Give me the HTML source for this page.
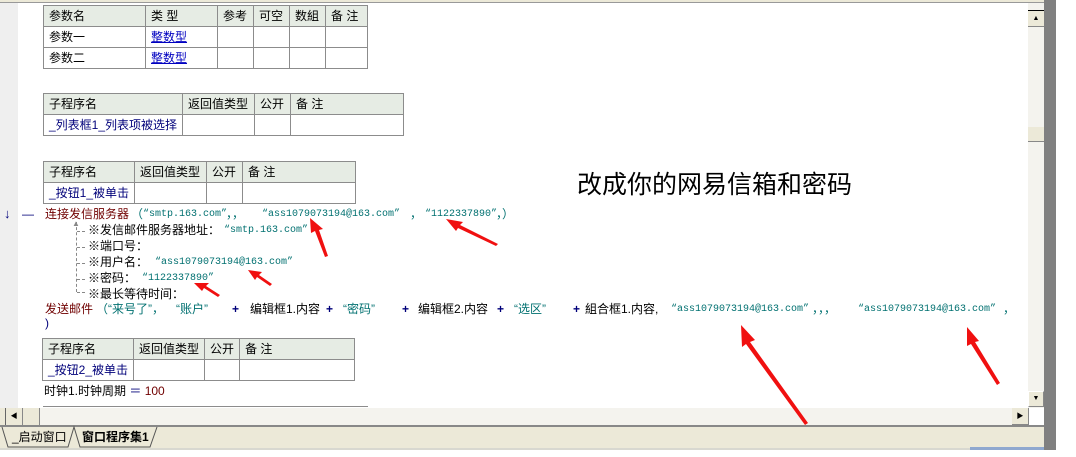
<!DOCTYPE html>
<html><head><meta charset="utf-8"><style>
*{margin:0;padding:0;box-sizing:border-box}
body{width:1076px;height:457px;position:relative;overflow:hidden;background:#fff;font-family:"Liberation Sans","WenQuanYi Zen Hei","Noto Sans CJK SC",sans-serif;font-size:12px;color:#000}
.a{position:absolute;white-space:nowrap;line-height:14px}
table{position:absolute;border-collapse:collapse;font-size:12px}
td{border:1px solid #8c8c8c;padding:0 5px;height:21px;line-height:14px;white-space:nowrap}
tr.h td{background:#e6ece4}
.bl{color:#0000c0;text-decoration:underline}
.nv{color:#00007a}
.dr{color:#700000}
.tl{color:#007070;font-family:"Liberation Mono",monospace;font-size:10px;margin-top:1px}
.tc{color:#007070;font-size:12px}
.op{color:#00007a;font-weight:bold}
</style></head><body>
<div style="position:absolute;left:0;top:0;width:18px;height:408px;background:#efefef"></div>
<div style="position:absolute;left:0;top:0;width:1044px;height:3px;background:#ece9d8;border-bottom:1px solid #999"></div>

<table style="left:43px;top:5px;width:325px">
<tr class="h"><td style="width:102px">参数名</td><td style="width:72px">类 型</td><td style="width:36px">参考</td><td style="width:36px">可空</td><td style="width:36px">数組</td><td>备 注</td></tr>
<tr><td>参数一</td><td class="bl">整数型</td><td></td><td></td><td></td><td></td></tr>
<tr><td>参数二</td><td class="bl">整数型</td><td></td><td></td><td></td><td></td></tr>
</table>

<table style="left:43px;top:93px;width:361px">
<tr class="h"><td style="width:138px">子程序名</td><td style="width:72px">返回值类型</td><td style="width:36px">公开</td><td>备 注</td></tr>
<tr><td class="nv">_列表框1_列表项被选择</td><td></td><td></td><td></td></tr>
</table>

<table style="left:43px;top:161px;width:313px">
<tr class="h"><td style="width:90px">子程序名</td><td style="width:72px">返回值类型</td><td style="width:36px">公开</td><td>备 注</td></tr>
<tr><td class="nv">_按钮1_被单击</td><td></td><td></td><td></td></tr>
</table>

<div class="a" style="left:577px;top:170px;font-size:25px;line-height:30px">改成你的网易信箱和密码</div>

<div class="a nv" style="left:4px;top:207px;font-weight:bold;font-size:13px">↓</div>
<div class="a nv" style="left:22px;top:207px">—</div>
<div class="a dr" style="left:45px;top:207px">连接发信服务器</div>
<div class="a tc" style="left:131px;top:207px">（</div>
<div class="a tl" style="left:143px;top:207px">“smtp.163.com”</div>
<div class="a tc" style="left:226px;top:207px">，，</div>
<div class="a tl" style="left:262px;top:207px">“ass1079073194@163.com”</div>
<div class="a tc" style="left:410px;top:207px">，</div>
<div class="a tl" style="left:425px;top:207px">“1122337890”</div>
<div class="a tc" style="left:496px;top:207px">，）</div>

<div style="position:absolute;left:76px;top:222px;height:70px;border-left:1px dashed #888"></div>
<div class="a" style="left:72px;top:217px;font-size:8px;color:#888">▲</div>
<div style="position:absolute;left:77px;top:231px;width:8px;border-top:1px dashed #888"></div>
<div style="position:absolute;left:77px;top:247px;width:8px;border-top:1px dashed #888"></div>
<div style="position:absolute;left:77px;top:263px;width:8px;border-top:1px dashed #888"></div>
<div style="position:absolute;left:77px;top:279px;width:8px;border-top:1px dashed #888"></div>
<div style="position:absolute;left:77px;top:292px;width:8px;border-top:1px dashed #888"></div>
<div class="a" style="left:88px;top:223px">※发信邮件服务器地址：</div><div class="a tl" style="left:224px;top:223px">“smtp.163.com”</div>
<div class="a" style="left:88px;top:239px">※端口号：</div>
<div class="a" style="left:88px;top:255px">※用户名：</div><div class="a tl" style="left:155px;top:255px">“ass1079073194@163.com”</div>
<div class="a" style="left:88px;top:271px">※密码：</div><div class="a tl" style="left:142px;top:271px">“1122337890”</div>
<div class="a" style="left:88px;top:287px">※最长等待时间：</div>

<div class="a dr" style="left:45px;top:302px">发送邮件</div>
<div class="a tc" style="left:96px;top:302px">（“来号了”，</div>
<div class="a tc" style="left:176px;top:302px">“账户”</div>
<div class="a op" style="left:232px;top:302px">+</div>
<div class="a" style="left:250px;top:302px">编辑框1.内容</div>
<div class="a op" style="left:326px;top:302px">+</div>
<div class="a tc" style="left:343px;top:302px">“密码”</div>
<div class="a op" style="left:402px;top:302px">+</div>
<div class="a" style="left:418px;top:302px">编辑框2.内容</div>
<div class="a op" style="left:497px;top:302px">+</div>
<div class="a tc" style="left:514px;top:302px">“选区”</div>
<div class="a op" style="left:573px;top:302px">+</div>
<div class="a" style="left:585px;top:302px">組合框1.内容,</div>
<div class="a tl" style="left:671px;top:302px">“ass1079073194@163.com”</div>
<div class="a tc" style="left:812px;top:302px">，，，</div>
<div class="a tl" style="left:858px;top:302px">“ass1079073194@163.com”</div>
<div class="a tc" style="left:1003px;top:302px">，</div>
<div class="a nv" style="left:45px;top:316px">)</div>

<table style="left:42px;top:338px;width:313px">
<tr class="h"><td style="width:87px">子程序名</td><td style="width:70px">返回值类型</td><td style="width:35px">公开</td><td>备 注</td></tr>
<tr><td class="nv">_按钮2_被单击</td><td></td><td></td><td></td></tr>
</table>
<div class="a" style="left:44px;top:384px">时钟1.时钟周期 <span class="nv">＝</span> <span class="dr">100</span></div>
<div style="position:absolute;left:43px;top:406px;width:325px;border-top:1px solid #8c8c8c"></div>

<div style="position:absolute;left:1028px;top:3px;width:16px;height:405px;background:#f4f3ee"></div>
<div style="position:absolute;left:1028px;top:10px;width:16px;height:17px;background:#ece9d8;border-top:1px solid #000;border-bottom:1px solid #888;font-size:7px;text-align:center;line-height:15px">▲</div>
<div style="position:absolute;left:1028px;top:127px;width:16px;height:15px;background:#ece9d8;border-bottom:1px solid #888"></div>
<div style="position:absolute;left:1028px;top:391px;width:16px;height:16px;background:#ece9d8;border:1px solid #fff;border-right-color:#888;border-bottom-color:#888;font-size:7px;text-align:center;line-height:14px">▼</div>
<div style="position:absolute;left:0;top:408px;width:1028px;height:17px;background:#f4f3ee"></div>
<div style="position:absolute;left:0;top:408px;width:6px;height:17px;background:#ece9d8;border-right:1px solid #666"></div>
<div style="position:absolute;left:6px;top:408px;width:17px;height:17px;background:#ece9d8;border-right:1px solid #888;font-size:7px;text-align:center;line-height:17px">◀</div>
<div style="position:absolute;left:23px;top:408px;width:17px;height:17px;background:#ece9d8;border-right:1px solid #888"></div>
<div style="position:absolute;left:1012px;top:408px;width:17px;height:17px;background:#ece9d8;border-right:1px solid #888;border-bottom:1px solid #888;font-size:7px;text-align:center;line-height:17px">▶</div>
<div style="position:absolute;left:0;top:425px;width:1044px;height:23px;background:#ece9d8;border-top:2px solid #888"></div>
<div class="a" style="left:12px;top:430px;color:#000">_启动窗口</div>
<div class="a" style="left:82px;top:430px;font-weight:bold">窗口程序集1</div>
<svg style="position:absolute;left:0;top:425px" width="170" height="24"><polyline points="2,2 8,22 68,22 74,2 80,22 150,22 157,2" fill="none" stroke="#555" stroke-width="1"/></svg>
<div style="position:absolute;left:0;top:448px;width:1056px;height:2px;background:#d8d8d0"></div>
<div style="position:absolute;left:1044px;top:0;width:12px;height:450px;background:#808080"></div>
<div style="position:absolute;left:970px;top:447px;width:74px;height:3px;background:#8fa8cf"></div>

<svg style="position:absolute;left:0;top:0" width="1076" height="457">
<g fill="#f01010">
<polygon points="310,218 323,229 319,230 328,256 325,257 315,231 311,233"/>
<polygon points="446,219 463,222 460,225 498,244 496,246 458,228 456,231"/>
<polygon points="248,270 262,272 259,275 272,284 270,286 257,277 255,280"/>
<polygon points="194,283 209,283 206,286 220,295 218,297 204,288 202,291"/>
<polygon points="741,325 755,340 750,342 808,423 805,425 746,344 742,347"/>
<polygon points="967,327 979,341 975,342 1000,383 997,385 971,344 967,346"/>
</g>
</svg>
</body></html>
